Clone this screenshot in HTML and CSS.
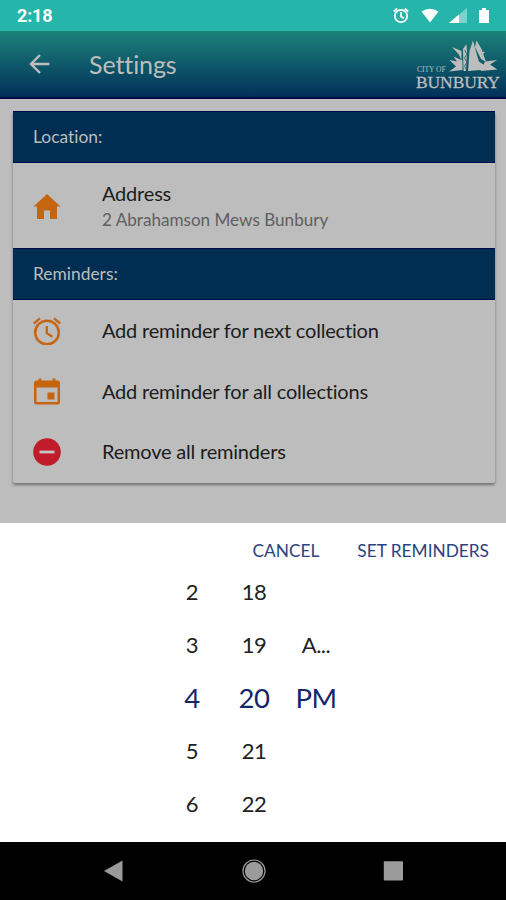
FILE: index.html
```
<!DOCTYPE html>
<html lang="en">
<head>
  <meta charset="utf-8">
  <title>Settings</title>
  <link rel="stylesheet" href="styles.css">
</head>
<body>
  <div class="status-bar">
    <span class="time">2:18</span>
    <svg class="status-icons" width="100" height="30" viewBox="390 0 100 30">
      <g fill="none" stroke="#fff" stroke-width="1.8">
        <circle cx="401" cy="16" r="6.2"/>
        <path d="M401 12v4.5l3 1.8M393.8 11.5l3.4-3M408.2 11.5l-3.4-3"/>
      </g>
      <path d="M421.500 11.500Q430 6 438.500 11.500L430 22.500z" fill="#fff"/>
      <path d="M449 23L467 8v15z" fill="#fff" opacity=".4"/>
      <path d="M449 23L459 14.500V23z" fill="#fff"/>
      <path d="M479 10h3V8h4v2h3v13h-10z" fill="#fff"/>
    </svg>
  </div>

  <div class="header">
    <svg class="back" width="24" height="24" viewBox="0 0 24 24">
      <path d="M21.500 12H3.500M12 3L3 12l9 9" fill="none" stroke="#bdbdbd" stroke-width="2.400"/>
    </svg>
    <h1>Settings</h1>
    <svg class="logo" width="90" height="54" viewBox="413 37 90 54">
      <g fill="#bdbdbd">
        <path d="M452 47l9.500 4v9l-3-6z"/>
        <path d="M449.500 60l7.500 1.500-3.500-5 9 4V70l-13.500 1.500 7-5z"/>
        <path d="M463 49l3.500-5 .5 8-1 19h-2.500z"/>
        <path d="M468 71l1.500-20 3.500-10.500 3.500 13 2.500 8 5 3.500 2 3-5 2z"/>
        <path d="M475 47l1.500-6.500 5 8.500 4.500 13-5-3z"/>
        <path d="M480 51.500l5 .5-2 2z"/>
        <path d="M485 61.500l12-1.500-7 4.500 7.500 5-17 1.500z"/>
      </g>
      <path d="M464.500 50l2.500 4-2.500 4 2.500 4-2.500 4 2 4" fill="none" stroke="#106068" stroke-width=".8"/>
      <text class="logo-small" x="417" y="72">CITY OF</text>
      <text class="logo-name" x="416" y="87.500">BUNBURY</text>
    </svg>
  </div>

  <div class="content">
    <div class="card">
      <h2>Location:</h2>
      <div class="item address">
        <svg width="28" height="28" viewBox="0 0 28 28">
          <path d="M0.500 14.500L14 2l13.500 12.500H24V27h-7v-8.500h-6V27H4V14.500z" fill="#c66510"/>
        </svg>
        <div>
          <h3>Address</h3>
          <p>2 Abrahamson Mews Bunbury</p>
        </div>
      </div>
      <h2>Reminders:</h2>
      <div class="item">
        <svg width="28" height="28" viewBox="0 0 28 28">
          <g fill="none" stroke="#c66510" stroke-width="2.500">
            <circle cx="14" cy="15.500" r="11.800"/>
            <path d="M13.800 9v7.200l5.600 3.600M.8 6.500L7 1.300M27.200 6.500L21 1.300" stroke-width="2.300"/>
          </g>
        </svg>
        <h3>Add reminder for next collection</h3>
      </div>
      <div class="item">
        <svg width="28" height="28" viewBox="0 0 28 28">
          <path fill-rule="evenodd" d="M5.500 0.500h3v2h11v-2h3v2H24.500a2.500 2.500 0 0 1 2.500 2.500v19a2.500 2.500 0 0 1-2.500 2.500h-21A2.500 2.500 0 0 1 1 24V5a2.500 2.500 0 0 1 2.500-2.500h2zM3.500 9.500V24h21V9.500zM14.500 14.500h7v7h-7z" fill="#c66510"/>
        </svg>
        <h3>Add reminder for all collections</h3>
      </div>
      <div class="item">
        <svg width="28" height="28" viewBox="0 0 28 28">
          <circle cx="14" cy="14" r="13.800" fill="#c01c2c"/>
          <path d="M6.500 14h15" stroke="#c8c4c4" stroke-width="2.800"/>
        </svg>
        <h3>Remove all reminders</h3>
      </div>
    </div>
  </div>

  <div class="picker">
    <div class="picker-buttons">
      <button class="cancel">CANCEL</button>
      <button class="set">SET REMINDERS</button>
    </div>
    <div class="columns">
      <ul>
        <li>2</li>
        <li>3</li>
        <li class="selected">4</li>
        <li>5</li>
        <li>6</li>
      </ul>
      <ul>
        <li>18</li>
        <li>19</li>
        <li class="selected">20</li>
        <li>21</li>
        <li>22</li>
      </ul>
      <ul>
        <li></li>
        <li>A...</li>
        <li class="selected">PM</li>
        <li></li>
        <li></li>
      </ul>
    </div>
  </div>

  <div class="nav-bar">
    <svg width="24" height="24" viewBox="0 0 24 24"><path d="M2 12L20.500 1.500v21z" fill="#9b9b9b"/></svg>
    <svg width="24" height="24" viewBox="0 0 24 24">
      <circle cx="12" cy="12" r="11" fill="none" stroke="#9b9b9b" stroke-width="1.200"/>
      <circle cx="12" cy="12" r="9.200" fill="#9b9b9b"/>
    </svg>
    <svg width="24" height="24" viewBox="0 0 24 24"><rect x="1.800" y="2.300" width="19.200" height="19.200" rx="1" fill="#9b9b9b"/></svg>
  </div>
</body>
</html>
```
FILE: styles.css
```
body {
  font-family: Lato, sans-serif;
  font-variant-ligatures: none;
  background-color: #bdbdbd;
  margin: 0;
  height: 900px;
  display: flex;
  flex-direction: column;
  overflow: hidden;
}

h1, h2, h3, p, ul {
  margin: 0;
  padding: 0;
  font-weight: normal;
}

.status-bar {
  height: 31px;
  background-color: #25b5aa;
  display: flex;
  justify-content: space-between;
  padding: 0 16px 0 17px;
}

.time {
  font-family: Roboto, sans-serif;
  font-size: 18px;
  font-weight: bold;
  line-height: 32px;
  letter-spacing: -0.2px;
  color: #fff;
}

.header {
  box-sizing: border-box;
  height: 68px;
  background: linear-gradient(#1b8379, #02305a);
  border-bottom: 2px solid #030b43;
  display: flex;
  align-items: center;
  padding: 0 3px 0 28px;
}

.header h1 {
  font-size: 25px;
  line-height: 30px;
  letter-spacing: -0.1px;
  color: #bdbdbd;
  margin-left: 37px;
}

.logo {
  margin-left: auto;
}

.logo text {
  font-family: "Liberation Serif", serif;
  fill: #bdbdbd;
}

.logo-small {
  font-size: 7.5px;
}

.logo-name {
  font-size: 17.5px;
  letter-spacing: -0.1px;
  stroke: #bdbdbd;
  stroke-width: 0.3px;
}

.content {
  height: 424px;
  box-sizing: border-box;
  padding: 12px 11px 0 13px;
}

.card {
  height: 372px;
  border-radius: 2px;
  box-shadow: 0 2px 3px rgba(0, 0, 0, 0.4);
}

.card h2 {
  box-sizing: border-box;
  height: 52px;
  padding-left: 20px;
  background-color: #002d52;
  border: solid #040b4c;
  border-width: 1px 0;
  color: #bdbdbd;
  font-size: 17.4px;
  line-height: 50px;
}

.item {
  height: 60.5px;
  display: flex;
  align-items: center;
  padding: 2px 20px 0;
  box-sizing: border-box;
}

.item svg {
  margin-right: 41px;
}

.item h3 {
  font-size: 20px;
  line-height: 26px;
  letter-spacing: -0.2px;
  padding-bottom: 2px;
  color: #1c1c1c;
}

.item p {
  font-size: 17.1px;
  line-height: 23px;
  color: #606060;
}

.address {
  height: 85px;
  padding-top: 0;
}

.picker {
  height: 319px;
  background-color: #fff;
}

.picker-buttons {
  display: flex;
  justify-content: flex-end;
  gap: 38px;
  height: 42px;
  padding: 0 17px;
}

.picker-buttons button {
  border: none;
  background: none;
  padding: 12px 0 0;
  font-family: Lato, sans-serif;
  font-size: 17.3px;
  color: #2b4380;
}

.columns {
  display: grid;
  grid-template-columns: 62px 62px 62px;
  margin-left: 161px;
}

.columns ul {
  list-style-type: none;
  text-align: center;
}

.columns li {
  height: 53px;
  line-height: 53px;
  font-size: 22px;
  letter-spacing: -0.5px;
  color: #222;
}

.columns .selected {
  font-size: 27.5px;
  line-height: 54px;
  color: #15266b;
}

.nav-bar {
  height: 58px;
  background-color: #000;
  display: flex;
  justify-content: center;
  align-items: center;
  gap: 116px;
  padding-left: 1px;
}
```
